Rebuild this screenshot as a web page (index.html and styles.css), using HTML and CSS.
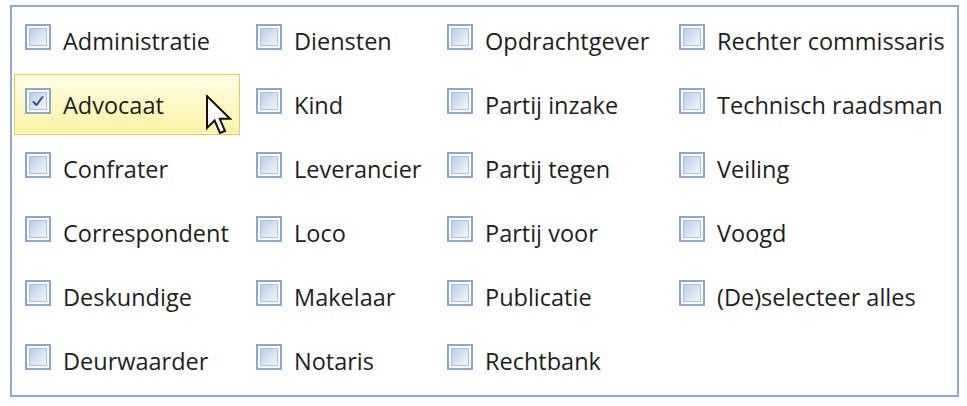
FILE: index.html
```html
<!DOCTYPE html>
<html lang="nl">
<head>
    <meta charset="UTF-8">
    <title>Rollen</title>
    <link rel="stylesheet" href="styles.css">
</head>
<body>
    <div class="frame">
        <div class="grid">
            <div class="item"><span class="box"><span class="inner"></span></span><span class="label">Administratie</span></div>
            <div class="item"><span class="box"><span class="inner"></span></span><span class="label">Diensten</span></div>
            <div class="item"><span class="box"><span class="inner"></span></span><span class="label">Opdrachtgever</span></div>
            <div class="item"><span class="box"><span class="inner"></span></span><span class="label">Rechter commissaris</span></div>

            <div class="item hot">
                <span class="box"><span class="inner">
                    <svg class="check" viewBox="0 0 16 16" width="16" height="16"><path d="M3.5 9 L6.5 12 L12.5 4" fill="none" stroke="#2c4f92" stroke-width="2" stroke-linecap="round" stroke-linejoin="round"/></svg>
                </span></span>
                <span class="label">Advocaat</span>
                <svg class="cursor" viewBox="0 0 13 21" width="26" height="42"><path d="M0.5 0.5 L0.5 16.5 L4.3 12.8 L7 19 L9.5 18 L6.9 11.9 L12 11.9 Z" fill="#fff" stroke="#111" stroke-width="1" stroke-linejoin="miter"/></svg>
            </div>
            <div class="item"><span class="box"><span class="inner"></span></span><span class="label">Kind</span></div>
            <div class="item"><span class="box"><span class="inner"></span></span><span class="label">Partij inzake</span></div>
            <div class="item"><span class="box"><span class="inner"></span></span><span class="label">Technisch raadsman</span></div>

            <div class="item"><span class="box"><span class="inner"></span></span><span class="label">Confrater</span></div>
            <div class="item"><span class="box"><span class="inner"></span></span><span class="label">Leverancier</span></div>
            <div class="item"><span class="box"><span class="inner"></span></span><span class="label">Partij tegen</span></div>
            <div class="item"><span class="box"><span class="inner"></span></span><span class="label">Veiling</span></div>

            <div class="item"><span class="box"><span class="inner"></span></span><span class="label">Correspondent</span></div>
            <div class="item"><span class="box"><span class="inner"></span></span><span class="label">Loco</span></div>
            <div class="item"><span class="box"><span class="inner"></span></span><span class="label">Partij voor</span></div>
            <div class="item"><span class="box"><span class="inner"></span></span><span class="label">Voogd</span></div>

            <div class="item"><span class="box"><span class="inner"></span></span><span class="label">Deskundige</span></div>
            <div class="item"><span class="box"><span class="inner"></span></span><span class="label">Makelaar</span></div>
            <div class="item"><span class="box"><span class="inner"></span></span><span class="label">Publicatie</span></div>
            <div class="item"><span class="box"><span class="inner"></span></span><span class="label">(De)selecteer alles</span></div>

            <div class="item"><span class="box"><span class="inner"></span></span><span class="label">Deurwaarder</span></div>
            <div class="item"><span class="box"><span class="inner"></span></span><span class="label">Notaris</span></div>
            <div class="item"><span class="box"><span class="inner"></span></span><span class="label">Rechtbank</span></div>
        </div>
    </div>
</body>
</html>
```

FILE: styles.css
```css
body {
    margin: 0;
    background: #fff;
    font-family: "Open Sans", "Noto Sans", sans-serif;
}
.frame {
    margin: 5px 0 0 10px;
    width: 949px;
    height: 392px;
    box-sizing: border-box;
    border: 2px solid #8eaad5;
    padding-left: 2px;
}
.grid {
    display: grid;
    grid-template-columns: 231px 191px 232px 1fr;
    grid-auto-rows: 64px;
}
.item {
    position: relative;
    display: flex;
    align-items: flex-start;
    box-sizing: border-box;
    height: 61px;
    margin-top: 3px;
    padding-left: 11px;
    border: 1px solid transparent;
}
.item.hot {
    width: 226px;
    border-color: #f3c445;
    background: linear-gradient(to bottom, #fffde4, #fdf3a6);
    box-shadow: inset 0 0 0 1px #fffbe0;
}
.box {
    display: block;
    flex: none;
    width: 26px;
    height: 26px;
    box-sizing: border-box;
    margin: 13px 0 0 -1px;
    border: 2px solid #8aa7d3;
    padding: 2px;
    background: #fff;
}
.inner {
    display: flex;
    align-items: center;
    justify-content: center;
    width: 100%;
    height: 100%;
    box-sizing: border-box;
    border: 1px solid #a9c0e4;
    background: linear-gradient(135deg, #b8cdec 0%, #d8e4f6 55%, #f3f7fd 100%);
}
.label {
    margin: 18px 0 0 12px;
    font-size: 23.5px;
    line-height: 24px;
    color: #1e1e1e;
    white-space: nowrap;
}
.cursor {
    position: absolute;
    left: 191px;
    top: 20px;
}
```
